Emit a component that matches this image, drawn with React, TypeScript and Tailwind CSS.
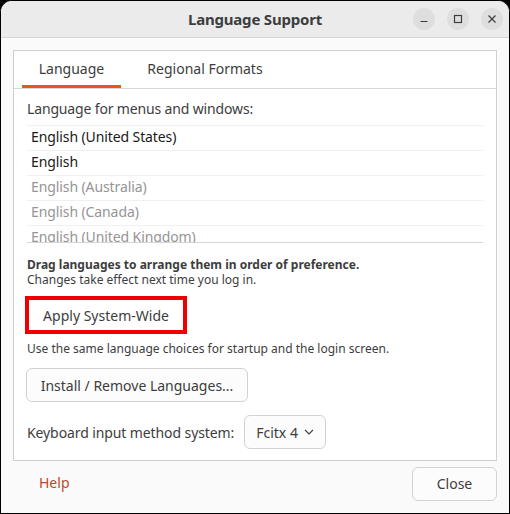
import type { JSX } from 'react';

const FONT = "font-['Noto_Sans',_'DejaVu_Sans',_sans-serif]";

const languages = [
  { name: 'English (United States)', active: true },
  { name: 'English', active: true },
  { name: 'English (Australia)', active: false },
  { name: 'English (Canada)', active: false },
  { name: 'English (United Kingdom)', active: false },
];

const TitleButton = ({ children }: { children: JSX.Element }): JSX.Element => (
  <div className="flex h-[22px] w-[22px] items-center justify-center rounded-full bg-[#dedede]">
    {children}
  </div>
);

export default function App(): JSX.Element {
  return (
    <div className={`h-[514px] w-[510px] bg-black ${FONT}`}>
      <div className="flex h-full flex-col overflow-hidden rounded-t-[12px] border border-black bg-[#fafafa]">
        {/* header bar */}
        <div className="relative flex h-[37px] shrink-0 items-center justify-center border-b border-[#d5d5d5] bg-[#ebebeb]">
          <span className="text-[15px] font-bold tracking-[-0.2px] text-[#3d3d3d]">Language Support</span>
          <div className="absolute right-[6px] top-[7px] flex gap-[12px]">
            <TitleButton>
              <svg width="10" height="10" viewBox="0 0 10 10">
                <path d="M1.5 7.5h7" stroke="#3d3d3d" strokeWidth="1.2" />
              </svg>
            </TitleButton>
            <TitleButton>
              <svg width="10" height="10" viewBox="0 0 10 10">
                <rect x="1.5" y="1.5" width="7" height="7" fill="none" stroke="#3d3d3d" strokeWidth="1.2" />
              </svg>
            </TitleButton>
            <TitleButton>
              <svg width="10" height="10" viewBox="0 0 10 10">
                <path d="M1.5 1.5l7 7M8.5 1.5l-7 7" stroke="#3d3d3d" strokeWidth="1.2" />
              </svg>
            </TitleButton>
          </div>
        </div>

        {/* notebook */}
        <div className="mx-[12px] mt-[12px] flex h-[411px] flex-col border border-[#cfcfcf] bg-white">
          <div className="flex h-[38px] shrink-0 border-b border-[#d8d8d8] pl-[8px]">
            <div className="flex w-[99px] flex-col">
              <div className="flex flex-1 items-center justify-center pt-[1px] text-[14px] text-[#3d3d3d]">Language</div>
              <div className="h-[3px] bg-[#e95420]" />
            </div>
            <div className="flex w-[168px] items-center justify-center pb-[2px] text-[14px] text-[#3d3d3d]">
              Regional Formats
            </div>
          </div>

          <div className="flex flex-col px-[13px] pt-[10px]">
            <div className="h-[26px] text-[14px] leading-[20px] tracking-[-0.15px] text-[#3d3d3d]">
              Language for menus and windows:
            </div>
            <div className="flex h-[118px] flex-col overflow-hidden border-b border-[#d5d5d5]">
              {languages.map((l) => (
                <div
                  key={l.name}
                  className={`flex h-[25px] shrink-0 items-center border-t border-[#f0f0f0] pb-[3px] pl-[4px] text-[14px] tracking-[-0.1px] ${
                    l.active ? 'text-[#1a1a1a]' : 'text-[#959595]'
                  }`}
                >
                  {l.name}
                </div>
              ))}
            </div>

            <div className="mt-[14px] text-[12px] font-bold leading-[15px] text-[#3d3d3d]">
              Drag languages to arrange them in order of preference.
            </div>
            <div className="text-[12px] leading-[15px] text-[#3d3d3d]">Changes take effect next time you log in.</div>

            <div className="-ml-[2px] mt-[9px] flex h-[38px] w-[162px] items-center justify-center border-[4px] border-[#ee0000] bg-white text-[14px] text-[#3d3d3d]">
              Apply System-Wide
            </div>

            <div className="mt-[7px] text-[12px] leading-[15px] text-[#3d3d3d]">
              Use the same language choices for startup and the login screen.
            </div>

            <div className="-ml-[1px] mt-[12px] flex h-[34px] w-[222px] items-center justify-center rounded-[6px] border border-[#d2d2d2] bg-[#fcfcfc] text-[14px] text-[#3d3d3d]">
              Install / Remove Languages...
            </div>

            <div className="mt-[13px] flex items-center gap-[10px]">
              <span className="text-[14px] tracking-[-0.1px] text-[#3d3d3d]">Keyboard input method system:</span>
              <div className="flex h-[34px] w-[82px] items-center gap-[6px] rounded-[6px] border border-[#d2d2d2] bg-[#fcfcfc] pl-[11px] text-[14px] text-[#3d3d3d]">
                Fcitx 4
                <svg width="10" height="6" viewBox="0 0 10 6">
                  <path d="M1 1l4 4 4-4" fill="none" stroke="#3d3d3d" strokeWidth="1.1" />
                </svg>
              </div>
            </div>
          </div>
        </div>

        {/* footer */}
        <div className="mx-[12px] mt-[6px] flex items-center justify-between">
          <span className="pb-[3px] pl-[26px] text-[14px] text-[#c4452b]">Help</span>
          <div className="flex h-[34px] w-[85px] items-center justify-center rounded-[6px] border border-[#d2d2d2] bg-[#fcfcfc] pb-[1px] text-[14px] text-[#3d3d3d]">
            Close
          </div>
        </div>
      </div>
    </div>
  );
}
